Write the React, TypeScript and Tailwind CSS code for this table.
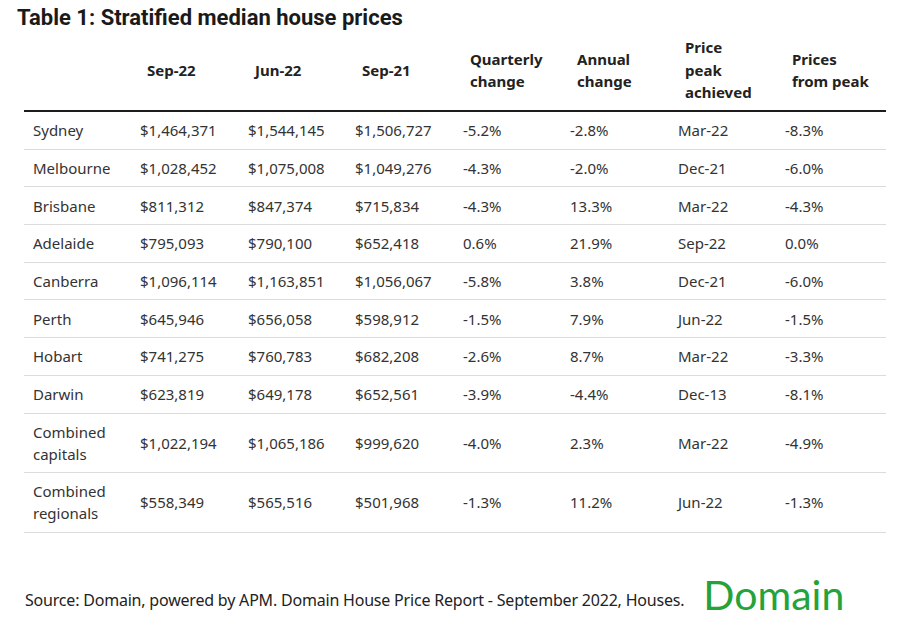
import React from "react";

type Row = { city: string[]; cells: string[]; tall?: boolean };

const rows: Row[] = [
  { city: ["Sydney"], cells: ["$1,464,371", "$1,544,145", "$1,506,727", "-5.2%", "-2.8%", "Mar-22", "-8.3%"] },
  { city: ["Melbourne"], cells: ["$1,028,452", "$1,075,008", "$1,049,276", "-4.3%", "-2.0%", "Dec-21", "-6.0%"] },
  { city: ["Brisbane"], cells: ["$811,312", "$847,374", "$715,834", "-4.3%", "13.3%", "Mar-22", "-4.3%"] },
  { city: ["Adelaide"], cells: ["$795,093", "$790,100", "$652,418", "0.6%", "21.9%", "Sep-22", "0.0%"] },
  { city: ["Canberra"], cells: ["$1,096,114", "$1,163,851", "$1,056,067", "-5.8%", "3.8%", "Dec-21", "-6.0%"] },
  { city: ["Perth"], cells: ["$645,946", "$656,058", "$598,912", "-1.5%", "7.9%", "Jun-22", "-1.5%"] },
  { city: ["Hobart"], cells: ["$741,275", "$760,783", "$682,208", "-2.6%", "8.7%", "Mar-22", "-3.3%"] },
  { city: ["Darwin"], cells: ["$623,819", "$649,178", "$652,561", "-3.9%", "-4.4%", "Dec-13", "-8.1%"] },
  { city: ["Combined", "capitals"], cells: ["$1,022,194", "$1,065,186", "$999,620", "-4.0%", "2.3%", "Mar-22", "-4.9%"], tall: true },
  { city: ["Combined", "regionals"], cells: ["$558,349", "$565,516", "$501,968", "-1.3%", "11.2%", "Jun-22", "-1.3%"], tall: true },
];

const headers: string[][] = [
  [],
  ["Sep-22"],
  ["Jun-22"],
  ["Sep-21"],
  ["Quarterly", "change"],
  ["Annual", "change"],
  ["Price", "peak", "achieved"],
  ["Prices", "from peak"],
];

const cols = "grid grid-cols-[116px_108px_107px_108px_107px_108px_107px_1fr]";

const App: React.FC = () => {
  return (
    <div className="w-[907px] h-[626px] bg-white overflow-hidden" style={{ fontFamily: "'Noto Sans', sans-serif" }}>
      <h1
        className="pl-[17px] pt-[4px] text-[22px] leading-[28px] font-bold text-[#1a1a1a]"
        style={{ fontFamily: "Roboto, sans-serif" }}
      >
        Table 1: Stratified median house prices
      </h1>

      {/* Table */}
      <div className="ml-[24px] w-[862px]">
        <div className={`${cols} h-[80px] border-b-2 border-[#1c1c1c] text-[15px] leading-[22.5px] font-bold text-[#222]`}>
          {headers.map((h, i) => (
            <div key={i} className={`flex flex-col justify-center pb-[2px] ${i === 0 ? "pl-[9px]" : "pl-[7px]"}`}>
              {h.map((line) => (
                <span key={line}>{line}</span>
              ))}
            </div>
          ))}
        </div>
        {rows.map((r) => (
          <div
            key={r.city.join(" ")}
            className={`${cols} ${r.tall ? "h-[59.6px]" : "h-[37.7px]"} border-b border-[#dcdcdc] text-[15px] leading-[22px] text-[#333]`}
          >
            <div className="pl-[9px] flex flex-col justify-center">
              {r.city.map((c) => (
                <span key={c}>{c}</span>
              ))}
            </div>
            {r.cells.map((c, i) => (
              <div key={i} className="flex items-center">
                {c}
              </div>
            ))}
          </div>
        ))}
      </div>

      {/* Footer */}
      <div className="flex items-center pl-[25px] mt-[40px]">
        <span className="text-[16px] text-[#222] tracking-[-0.2px] pt-[10px]">
          Source: Domain, powered by APM. Domain House Price Report - September 2022, Houses.
        </span>
        <span
          className="ml-[19px] text-[41px] leading-[44px] text-[#24a33a]"
          style={{ fontFamily: "Lato, sans-serif" }}
        >
          Domain
        </span>
      </div>
    </div>
  );
};

export default App;
